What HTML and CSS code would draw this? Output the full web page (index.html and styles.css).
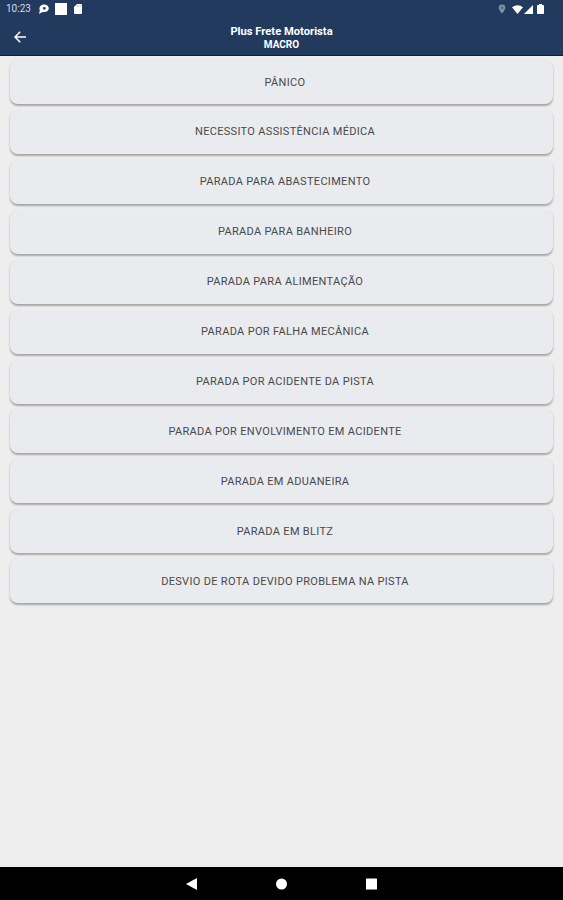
FILE: index.html
```html
<!DOCTYPE html>
<html lang="pt-BR">
<head>
    <meta charset="UTF-8">
    <meta name="viewport" content="width=device-width, initial-scale=1.0">
    <title>Plus Frete Motorista</title>
    <link rel="stylesheet" href="styles.css">
</head>
<body>
    <header>
        <!-- Status bar -->
        <div class="status-bar">
            <span class="clock">10:23</span>
            <svg class="icon-chat" width="12" height="12" viewBox="0 0 12 12">
                <path fill="#fff" fill-rule="evenodd" d="M6 1.500a4.500 3.800 0 0 1 4.800 3.700c0 2.200-2 3.800-4.500 3.800L4 9.200 1 11l.8-3.500C.5 4 3 1.500 6 1.500zM6.300 3.900a1.400 1.400 0 1 0 0 2.800a1.400 1.400 0 1 0 0-2.800z"/>
            </svg>
            <span class="icon-square"></span>
            <svg class="icon-sd" width="8" height="10" viewBox="0 0 8 10">
                <path fill="#fff" d="M3 0h4q1 0 1 1v8q0 1-1 1H1q-1 0-1-1V3z"/>
                <path stroke="#9eabba" stroke-width=".7" d="M3.300 1.300v1.500M4.900 1.300v1.500M6.500 1.300v1.500"/>
            </svg>
            <div class="status-right">
                <svg class="icon-pin" width="8" height="10" viewBox="0 0 8 10">
                    <path fill="#8290a3" d="M4 .5a3.300 3.300 0 0 1 3.300 3.300C7.300 6 4 9.500 4 9.500S.7 6 .7 3.800A3.300 3.300 0 0 1 4 .5z"/>
                    <circle cx="4" cy="3.800" r="1.300" fill="#4d607c"/>
                </svg>
                <svg class="icon-wifi" width="11" height="9" viewBox="0 0 11 9">
                    <path fill="#fff" d="M0 2.200Q5.500-1.800 11 2.200L5.500 9z"/>
                </svg>
                <svg class="icon-signal" width="9" height="9" viewBox="0 0 9 9">
                    <path fill="#fff" d="M9 0v9H0z"/>
                </svg>
                <svg class="icon-battery" width="7" height="10" viewBox="0 0 7 10">
                    <path fill="#fff" d="M2 0h3v1h1.200q.8 0 .8.800v7.400q0 .8-.8.800H.8q-.8 0-.8-.8V1.800Q0 1 .8 1H2z"/>
                </svg>
            </div>
        </div>

        <!-- Title bar -->
        <div class="title-bar">
            <a class="back" href="#" aria-label="Voltar">
                <svg width="12" height="12" viewBox="0 0 12 12" fill="none" stroke="#fff" stroke-width="1.500">
                    <path d="M12 6H1.200M6.200.8L1 6l5.200 5.200"/>
                </svg>
            </a>
            <div class="title">
                <h1>Plus Frete Motorista</h1>
                <h2>MACRO</h2>
            </div>
        </div>
    </header>

    <main class="macro-list">
        <button>PÂNICO</button>
        <button>NECESSITO ASSISTÊNCIA MÉDICA</button>
        <button>PARADA PARA ABASTECIMENTO</button>
        <button>PARADA PARA BANHEIRO</button>
        <button>PARADA PARA ALIMENTAÇÃO</button>
        <button>PARADA POR FALHA MECÂNICA</button>
        <button>PARADA POR ACIDENTE DA PISTA</button>
        <button>PARADA POR ENVOLVIMENTO EM ACIDENTE</button>
        <button>PARADA EM ADUANEIRA</button>
        <button>PARADA EM BLITZ</button>
        <button>DESVIO DE ROTA DEVIDO PROBLEMA NA PISTA</button>
    </main>

    <!-- Android navigation -->
    <footer>
        <svg width="11" height="12" viewBox="0 0 11 12"><path fill="#fff" d="M11 0v12L0 6z"/></svg>
        <svg width="11" height="12" viewBox="0 0 11 12"><circle cx="5.500" cy="6" r="5.500" fill="#fff"/></svg>
        <svg width="11" height="12" viewBox="0 0 11 12"><rect y=".5" width="11" height="11" rx=".5" fill="#fff"/></svg>
    </footer>
</body>
</html>
```
FILE: styles.css
```css
* {
    box-sizing: border-box;
}

body {
    margin: 0;
    height: 100vh;
    display: flex;
    flex-direction: column;
    background-color: #eeeeee;
    font-family: Roboto, sans-serif;
    overflow: hidden;
}

svg {
    display: block;
    flex-shrink: 0;
}

/* Header */
header {
    height: 56px;
    flex-shrink: 0;
    background-color: #223a5e;
    border-bottom: 1px solid #0d1c4c;
    color: white;
}

.status-bar {
    height: 18px;
    display: flex;
    align-items: center;
    padding: 0 19px 0 6px;
}

.clock {
    width: 32px;
    font-size: 10px;
    line-height: 18px;
    color: #d5dbe3;
}

.icon-square {
    width: 12px;
    height: 12px;
    margin: 0 7px 0 5px;
    background-color: white;
}

.status-right {
    margin-left: auto;
    display: flex;
    align-items: center;
}

.icon-wifi {
    margin: 0 1px 0 6px;
}

.icon-battery {
    margin-left: 4px;
}

.title-bar {
    height: 37px;
    display: grid;
    grid-template-columns: 40px 1fr 40px;
    align-items: center;
}

.back {
    padding-left: 14px;
}

.title {
    padding-top: 3px;
    text-align: center;
}

.title h1,
.title h2 {
    margin: 0;
    font-weight: 700;
}

.title h1 {
    font-size: 11.2px;
    line-height: 13px;
}

.title h2 {
    font-size: 10px;
    line-height: 13px;
}

/* Macro list */
.macro-list {
    flex-grow: 1;
    display: flex;
    flex-direction: column;
    gap: 5.93px;
    padding: 4px 10px 0;
}

.macro-list button {
    height: 44px;
    flex-shrink: 0;
    border: none;
    border-radius: 8px;
    padding: 0 0 0 7px;
    background-color: #eaebee;
    box-shadow: 0 1.5px 2px rgba(0, 0, 0, 0.3);
    color: #48494b;
    font-family: inherit;
    font-size: 11px;
    letter-spacing: 0.32px;
}

/* Navigation bar */
footer {
    height: 33px;
    flex-shrink: 0;
    display: flex;
    justify-content: center;
    align-items: center;
    gap: 79px;
    background-color: black;
}
```
